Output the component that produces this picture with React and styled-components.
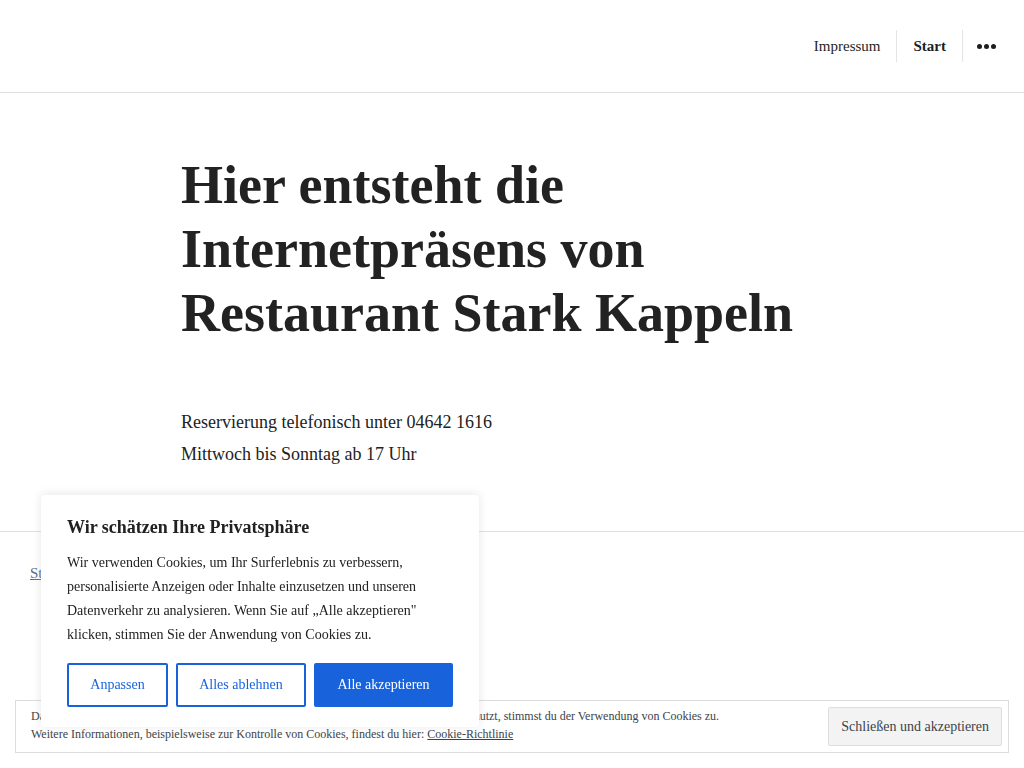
import React from "react";
import styled, { createGlobalStyle } from "styled-components";

const GlobalStyle = createGlobalStyle`
  html, body {
    margin: 0;
    padding: 0;
    background: #fff;
    color: #1e1e1e;
    font-family: "Liberation Serif", "Times New Roman", serif;
  }
  * { box-sizing: border-box; }
`;

const Header = styled.header`
  height: 93px;
  border-bottom: 1px solid #e0e0e0;
  display: flex;
  align-items: center;
  justify-content: flex-end;
  padding: 0 27px 0 0;
`;

const Nav = styled.nav`
  display: flex;
  align-items: center;
  height: 32px;
`;

const NavItem = styled.a`
  font-size: 15px;
  color: #1e1e1e;
  text-decoration: none;
  font-weight: ${(p) => (p.active ? 700 : 400)};
  padding: 0 ${(p) => (p.first ? 15 : 16)}px 0 17px;
  height: 32px;
  display: flex;
  align-items: center;
  border-left: ${(p) => (p.first ? "none" : "1px solid #e4e4e4")};
`;

const Dots = styled.span`
  display: flex;
  gap: 2px;
  padding: 0 1px 0 14px;
  height: 32px;
  align-items: center;
  border-left: 1px solid #e4e4e4;

  i {
    width: 5px;
    height: 5px;
    border-radius: 50%;
    background: #1e1e1e;
  }
`;

const Main = styled.main`
  width: 662px;
  margin: 0 auto;
  padding: 60px 0 61px;
`;

const Title = styled.h1`
  margin: 0 0 61px;
  font-size: 54px;
  line-height: 64px;
  font-weight: 700;
  color: #222;
`;

const Line = styled.p`
  margin: 0;
  font-size: 18px;
  line-height: 32px;
  color: #222;
`;

const Footer = styled.footer`
  border-top: 1px solid #e0e0e0;
  padding: 32px 30px 180px;
`;

const FooterLink = styled.a`
  font-size: 15px;
  color: #5a6b87;
  text-decoration: underline;
`;

const Banner = styled.div`
  position: fixed;
  left: 41px;
  bottom: 41px;
  width: 438px;
  background: #fff;
  border-radius: 4px;
  box-shadow: 0 -1px 10px rgba(172, 171, 171, 0.3);
  padding: 20px 26px 20px;
  z-index: 10;
`;

const BannerTitle = styled.h2`
  margin: 0 0 12px;
  font-size: 18px;
  line-height: 24px;
  font-weight: 700;
  color: #212121;
`;

const BannerText = styled.p`
  margin: 0 0 16px;
  font-size: 14px;
  line-height: 24px;
  color: #212121;
`;

const Buttons = styled.div`
  display: flex;
  gap: 8px;
`;

const Btn = styled.button`
  height: 44px;
  width: ${(p) => p.w}px;
  font-family: inherit;
  font-size: 14px;
  border: 2px solid #1863dc;
  border-radius: 2px;
  background: ${(p) => (p.primary ? "#1863dc" : "#fff")};
  color: ${(p) => (p.primary ? "#fff" : "#1863dc")};
  cursor: pointer;
`;

const Bar = styled.div`
  position: fixed;
  left: 15px;
  right: 15px;
  bottom: 15px;
  height: 53px;
  background: #fff;
  border: 1px solid #dcdcde;
  display: flex;
  align-items: center;
  justify-content: space-between;
  padding: 0 6px 3px 15px;
`;

const BarText = styled.div`
  font-size: 12px;
  line-height: 18px;
  color: #3c434a;

  a {
    color: #3c434a;
    text-decoration: underline;
  }
`;

const CloseBtn = styled.button`
  height: 39px;
  padding: 0 12px;
  margin-top: 3px;
  font-family: inherit;
  font-size: 14px;
  color: #3c434a;
  background: #f3f3f3;
  border: 1px solid #dedede;
  border-radius: 2px;
`;

export default function App() {
  return (
    <>
      <GlobalStyle />
      <Header>
        <Nav>
          <NavItem first href="#">Impressum</NavItem>
          <NavItem active href="#">Start</NavItem>
          <Dots><i /><i /><i /></Dots>
        </Nav>
      </Header>
      <Main>
        <Title>
          Hier entsteht die Internetpräsens von Restaurant Stark Kappeln
        </Title>
        <Line>Reservierung telefonisch unter 04642 1616</Line>
        <Line>Mittwoch bis Sonntag ab 17 Uhr</Line>
      </Main>
      <Footer>
        <FooterLink href="#">Stolz präsentiert von WordPress</FooterLink>
      </Footer>
      <Bar>
        <BarText>
          Datenschutz &amp; Cookies: Diese Website verwendet Cookies. Wenn du die Website weiterhin nutzt, stimmst du der Verwendung von Cookies zu.
          <br />
          Weitere Informationen, beispielsweise zur Kontrolle von Cookies, findest du hier: <a href="#">Cookie-Richtlinie</a>
        </BarText>
        <CloseBtn>Schließen und akzeptieren</CloseBtn>
      </Bar>
      <Banner>
        <BannerTitle>Wir schätzen Ihre Privatsphäre</BannerTitle>
        <BannerText>
          Wir verwenden Cookies, um Ihr Surferlebnis zu verbessern, personalisierte Anzeigen oder Inhalte einzusetzen und unseren Datenverkehr zu analysieren. Wenn Sie auf „Alle akzeptieren" klicken, stimmen Sie der Anwendung von Cookies zu.
        </BannerText>
        <Buttons>
          <Btn w={101}>Anpassen</Btn>
          <Btn w={130}>Alles ablehnen</Btn>
          <Btn w={139} primary>Alle akzeptieren</Btn>
        </Buttons>
      </Banner>
    </>
  );
}
